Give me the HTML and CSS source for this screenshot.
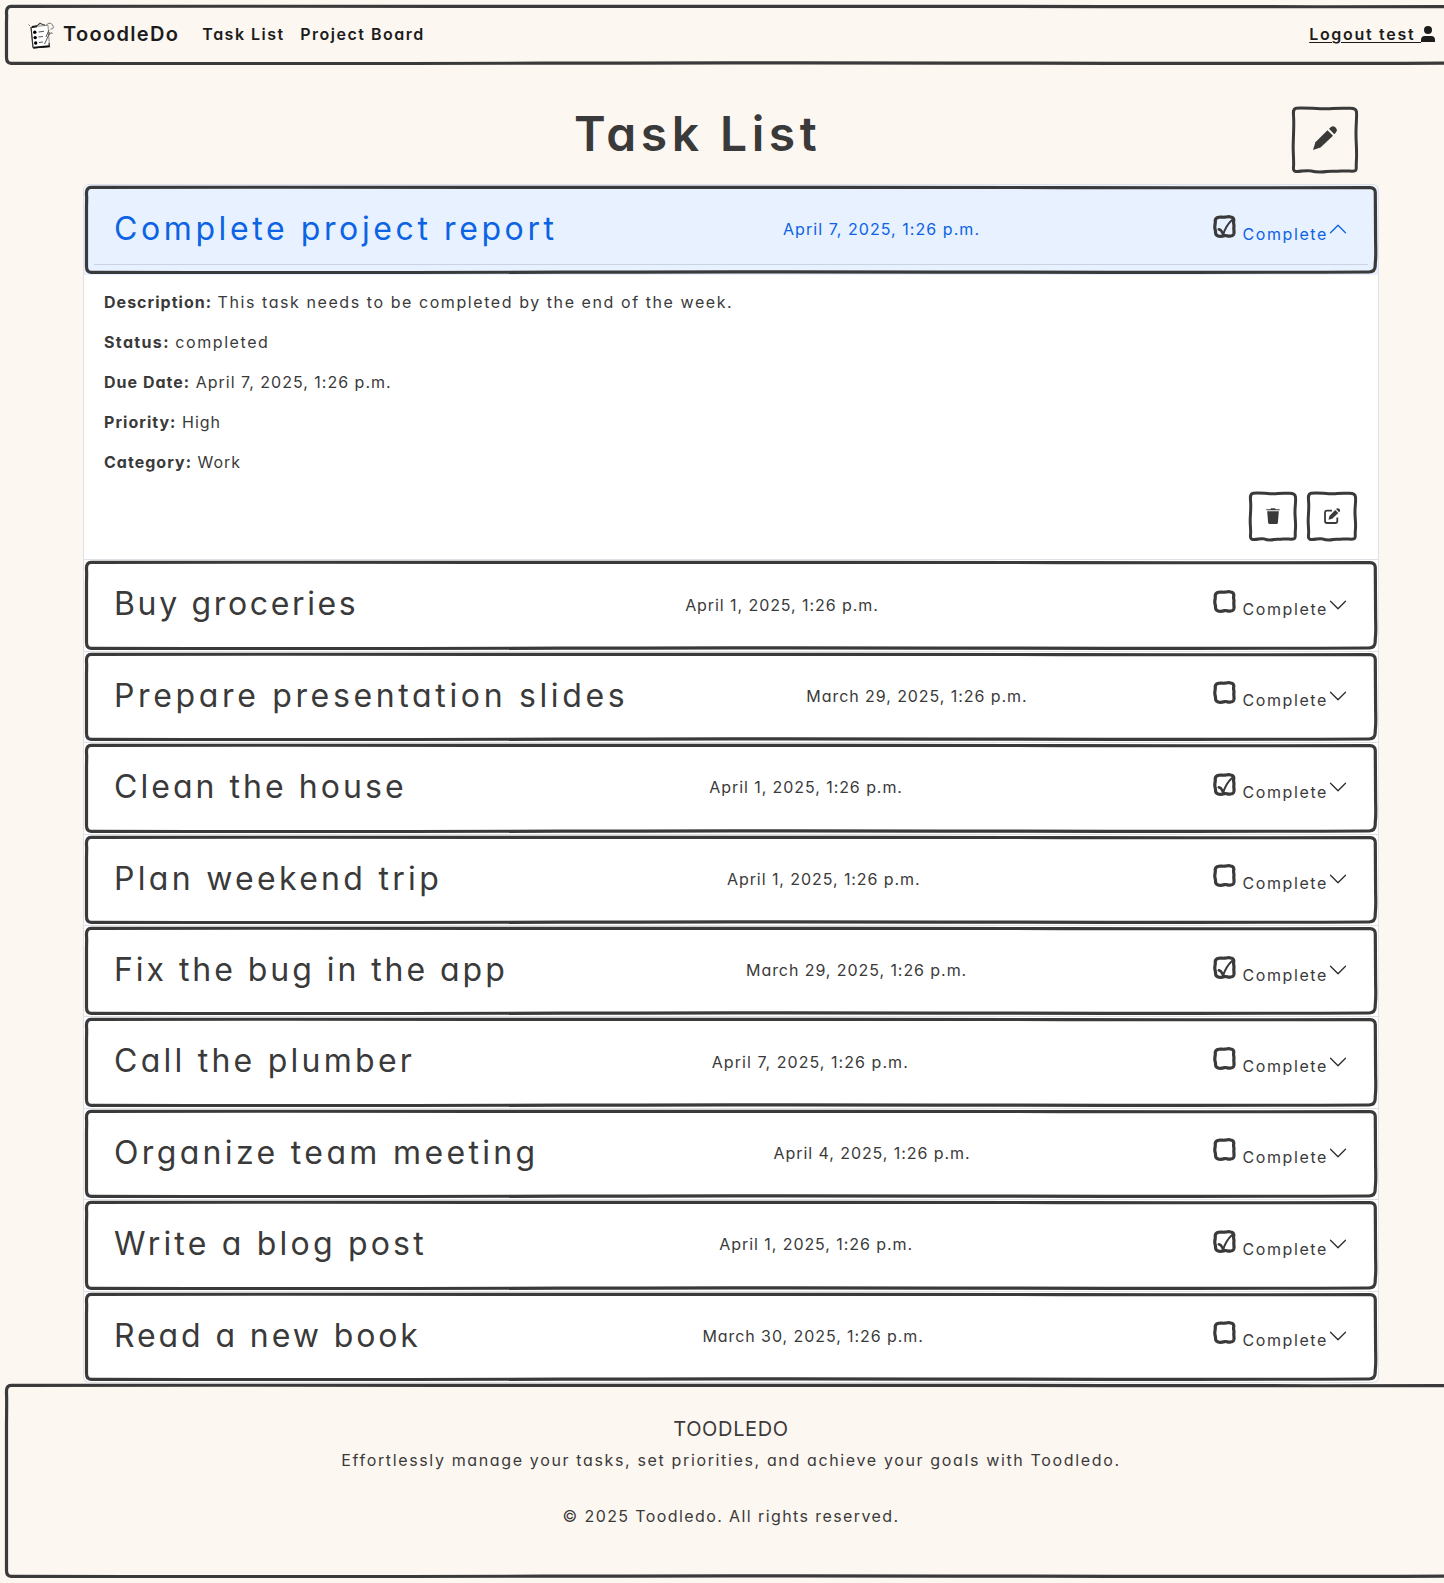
FILE: index.html
```html
<!DOCTYPE html>
<html lang="en">
<head>
<meta charset="utf-8">
<title>Task List</title>
<link rel="stylesheet" href="styles.css">
</head>
<body>
<svg class="defs" aria-hidden="true">
  <symbol id="chevron" viewBox="0 0 16 16"><path d="M1.646 4.646a.5.5 0 0 1 .708 0L8 10.293l5.646-5.647a.5.5 0 0 1 .708.708l-6 6a.5.5 0 0 1-.708 0l-6-6a.5.5 0 0 1 0-.708z"/></symbol>
  <symbol id="box" viewBox="0 0 23 23"><path class="ink" d="M5.5 2.3C8 1.6 9.5 2.4 11.5 2.2S15.500 1.200 17.800 2Q21 2.600 20.800 5.500C20 8 21.300 9.500 20.900 12S21.400 16 20.900 18.500Q20.300 21 17.500 21C15.500 21.800 13.500 20 11.500 20.600S7.500 21.800 5 20.900Q2.600 20.300 2.500 17.500C2.800 15.500 1.600 14 1.800 11.500S2.600 7.500 2.200 5.500Q2.600 2.700 5.500 2.300Z"/></symbol>
  <symbol id="box-on" viewBox="0 0 23 23"><use href="#box"/><path class="tick" d="M5.800 14.300L7.800 15.200 10.200 19.200"/><path class="tick thin" d="M10.200 19.400Q13 10.500 19 5"/></symbol>
</svg>
<div class="page">
  <header class="navbar sketch">
    <svg class="logo" viewBox="0 0 26 27">
      <path d="M3 5L20 3.200 21.500 24.500 5 26Z" fill="#fff" stroke="#777" stroke-width=".8"/>
      <path d="M5 26L21.500 24.600 21 21M3 5L5 25.500" fill="none" stroke="#333" stroke-width="1.200"/>
      <path d="M4 5L9 4.300" fill="none" stroke="#111" stroke-width="2"/>
      <path d="M7 4.500L10 3 12 1.200 14.500 2.500 17 3.200" fill="none" stroke="#444" stroke-width="1.200"/>
      <path d="M5.500 25.600L21 24.200" fill="none" stroke="#111" stroke-width="1.800"/>
      <path d="M10.500 10L16 9.300M10.500 15L15 14.500M11 20.500L15 20M22 10L18 19 16.500 22M21 8L18 15" fill="none" stroke="#555" stroke-width="1"/>
      <path d="M18 3.500Q22-1 24.500 3T22.500 7M21 13Q25 9 24 12M.5 2.500L2 4" fill="none" stroke="#666" stroke-width=".9"/>
      <circle cx="6.800" cy="10.300" r="1.700"/><circle cx="7.200" cy="15.600" r="1.700"/><circle cx="7.700" cy="21" r="1.700"/>
    </svg>
    <a class="brand">TooodleDo</a>
    <a class="nav-link">Task List</a>
    <a class="nav-link">Project Board</a>
    <a class="logout"><span>Logout test </span><svg viewBox="0 0 14 16"><circle cx="7" cy="4" r="4"/><path d="M0 16V14Q0 10 4 10H10Q14 10 14 14V16Z"/></svg></a>
  </header>

  <main class="container">
    <div class="heading">
      <h1>Task List</h1>
      <button class="icon-btn big rough" aria-label="New task"><svg viewBox="0 0 24 24"><path d="M14.500 4.200L20 9.700 7.500 21.600 0 24 2.400 16.300Z"/><path d="M16 2.800L18 .9Q20-.8 22.500 1.500T23 6.200L21.300 8.200Z"/></svg></button>
    </div>

    <div class="accordion">
      <section class="item">
        <div class="row sketch open"><h2>Complete project report</h2><span class="date d7">April 7, 2025, 1:26 p.m.</span><div class="check"><svg class="checkbox"><use href="#box-on"/></svg><label>Complete</label><svg class="chevron"><use href="#chevron"/></svg></div></div>
        <div class="details">
          <p><strong>Description:</strong> <span class="wide">This task needs to be completed by the end of the week.</span></p>
          <p><strong class="status">Status:</strong> <span class="wide">completed</span></p>
          <p><strong>Due Date:</strong> April 7, 2025, 1:26 p.m.</p>
          <p><strong>Priority:</strong> High</p>
          <p><strong>Category:</strong> Work</p>
          <div class="actions">
            <button class="icon-btn rough" aria-label="Delete"><svg viewBox="0 0 16 16"><path d="M1.300 2.200V1.200H5.400L6 .300H10L10.600 1.200H14.700V2.200ZM2.200 3.200H13.800L12.900 14.800Q12.800 15.900 11.800 15.900H4.200Q3.200 15.900 3.100 14.800Z"/></svg></button>
            <button class="icon-btn edit rough" aria-label="Edit"><svg viewBox="0 0 16 16"><path d="M8 2.600H3Q1 2.600 1 4.600V13Q1 15 3 15H11.300Q13.300 15 13.300 13V9.500" fill="none" stroke="currentColor" stroke-width="1.800"/><path d="M11.200 1.900L14.300 4.900 8.200 10.800 4.500 11.700 5.400 7.900Z"/><path d="M12 1.100Q13.800-.700 15.400.900T15.100 4.200Z"/></svg></button>
          </div>
        </div>
      </section>
      <section class="item"><div class="row sketch"><h2>Buy groceries</h2><span class="date">April 1, 2025, 1:26 p.m.</span><div class="check"><svg class="checkbox"><use href="#box"/></svg><label>Complete</label><svg class="chevron"><use href="#chevron"/></svg></div></div></section>
      <section class="item"><div class="row sketch"><h2>Prepare presentation slides</h2><span class="date">March 29, 2025, 1:26 p.m.</span><div class="check"><svg class="checkbox"><use href="#box"/></svg><label>Complete</label><svg class="chevron"><use href="#chevron"/></svg></div></div></section>
      <section class="item"><div class="row sketch"><h2>Clean the house</h2><span class="date">April 1, 2025, 1:26 p.m.</span><div class="check"><svg class="checkbox"><use href="#box-on"/></svg><label>Complete</label><svg class="chevron"><use href="#chevron"/></svg></div></div></section>
      <section class="item"><div class="row sketch"><h2>Plan weekend trip</h2><span class="date">April 1, 2025, 1:26 p.m.</span><div class="check"><svg class="checkbox"><use href="#box"/></svg><label>Complete</label><svg class="chevron"><use href="#chevron"/></svg></div></div></section>
      <section class="item"><div class="row sketch"><h2>Fix the bug in the app</h2><span class="date">March 29, 2025, 1:26 p.m.</span><div class="check"><svg class="checkbox"><use href="#box-on"/></svg><label>Complete</label><svg class="chevron"><use href="#chevron"/></svg></div></div></section>
      <section class="item"><div class="row sketch"><h2>Call the plumber</h2><span class="date d7">April 7, 2025, 1:26 p.m.</span><div class="check"><svg class="checkbox"><use href="#box"/></svg><label>Complete</label><svg class="chevron"><use href="#chevron"/></svg></div></div></section>
      <section class="item"><div class="row sketch"><h2>Organize team meeting</h2><span class="date">April 4, 2025, 1:26 p.m.</span><div class="check"><svg class="checkbox"><use href="#box"/></svg><label>Complete</label><svg class="chevron"><use href="#chevron"/></svg></div></div></section>
      <section class="item"><div class="row sketch"><h2>Write a blog post</h2><span class="date">April 1, 2025, 1:26 p.m.</span><div class="check"><svg class="checkbox"><use href="#box-on"/></svg><label>Complete</label><svg class="chevron"><use href="#chevron"/></svg></div></div></section>
      <section class="item"><div class="row sketch"><h2>Read a new book</h2><span class="date">March 30, 2025, 1:26 p.m.</span><div class="check"><svg class="checkbox"><use href="#box"/></svg><label>Complete</label><svg class="chevron"><use href="#chevron"/></svg></div></div></section>
    </div>
  </main>

  <footer class="footer sketch">
    <h5>TOODLEDO</h5>
    <p class="tagline">Effortlessly manage your tasks, set priorities, and achieve your goals with Toodledo.</p>
    <p class="copy">© 2025 Toodledo. All rights reserved.</p>
  </footer>
</div>
</body>
</html>
```
FILE: styles.css
```css
* { box-sizing: border-box; }

body {
  margin: 0;
  overflow: hidden;
  background: #fdf7f1;
  color: #3a3a3a;
  font-family: Inter, "Open Sans", sans-serif;
  font-feature-settings: "cv11";
  font-size: 16px;
  line-height: 24px;
}

h1, h2, h5, p { margin: 0; }
.defs { position: absolute; width: 0; height: 0; }
.ink { fill: none; stroke: #3a3a3a; stroke-width: 3.2; }
.tick { fill: none; stroke: #3a3a3a; stroke-width: 2.6; stroke-linecap: round; stroke-linejoin: round; }
.tick.thin { stroke-width: 2; }

/* hand drawn frames */
.sketch {
  border: 10px solid transparent;
  border-image: url("data:image/svg+xml,%3Csvg xmlns='http://www.w3.org/2000/svg' width='300' height='300'%3E%3Cpath fill='none' stroke='%233a3a3a' stroke-width='3.2' d='M7 2.400C60 1.900 110 2.600 160 2.400S250 3.100 292 2.600Q297.500 2.800 297.300 8C296.800 60 297 120 297.600 200S297.200 270 297.200 291Q297 296.800 291 297C240 298 200 296.600 150 296.900S60 297.900 7 297.300Q2.400 297.200 2.500 291C2.600 200 2.100 120 2.500 60S2.500 20 2.500 8Q2.600 2.600 7 2.400Z'/%3E%3C/svg%3E") 10 stretch;
}
.rough {
  border: 10px solid transparent;
  border-image: url("data:image/svg+xml,%3Csvg xmlns='http://www.w3.org/2000/svg' width='50' height='50'%3E%3Cpath fill='none' stroke='%233a3a3a' stroke-width='3' d='M5 2.200C9 1.800 13 2 17 2.300S22 3.100 27 2.700S34 1.900 40 2.300Q47 1.800 47.500 6C48 12 46.800 15 47 22S48 32 47.400 38S48 45 46.500 46.500C44 48 40 46.500 35 47S29 46.800 26 47.500S19 48 16 46.900S9 48 5 47.500Q2 47.400 2.500 43C3.100 38 2 34 2.200 28S3 17 2.700 12S1.500 3 5 2.200Z'/%3E%3C/svg%3E") 10 stretch;
}

.page {
  display: flex;
  flex-direction: column;
  width: 1454px;
  margin: 4px 0 0 4px;
}

.navbar {
  display: flex;
  align-items: center;
  height: 61.500px;
  padding: 0 12px 1px 14px;
  color: #1c1c1c;
  font-weight: 600;
}
.logo { width: 26px; height: 27px; margin: 3px 9px 0 0; }
.brand { font-size: 20px; letter-spacing: 1.33px; margin: -1px 23px 0 0; }
.nav-link { letter-spacing: 1.5px; margin-right: 15.500px; }
.logout { display: flex; align-items: center; margin-left: auto; letter-spacing: 1.7px; }
.logout span { white-space: pre; text-decoration: underline; text-underline-offset: 2px; }
.logout svg { width: 14px; height: 16px; margin-right: 1px; fill: currentColor; }

.container { width: 1296px; margin: 40.500px 0 0 79px; }
.heading { display: flex; height: 78px; padding-right: 20px; }
.heading h1 {
  flex: 1;
  padding-left: 21px;
  text-align: center;
  font-size: 48px;
  font-weight: 600;
  line-height: 56px;
  letter-spacing: 4.5px;
}

.icon-btn {
  display: flex;
  align-items: center;
  justify-content: center;
  width: 50px;
  height: 51px;
  padding: 0;
  background: none;
  color: #3a3a3a;
}
.icon-btn svg { width: 16px; height: 16px; fill: currentColor; margin-top: -2px; overflow: visible; }
.icon-btn.edit { width: 52px; }
.icon-btn.big { width: 68px; height: 68px; }
.icon-btn.big svg { width: 24px; height: 24px; margin-top: -4px; }

.accordion {
  border: 1px solid #dee2e6;
  border-bottom: 0;
  border-radius: 6px;
  background: #fff;
}
.item { border-bottom: 1px solid #dee2e6; }
.item:last-child { border-radius: 0 0 6px 6px; }
.row {
  display: flex;
  align-items: center;
  justify-content: space-between;
  height: 90.4px;
  padding: 15px 20px 17px;
}
.row.open {
  background: #e7f1ff;
  color: #0c63e4;
  box-shadow: inset 0 -1px 0 #c9d3e2;
  border-radius: 6px 6px 0 0;
}
.row h2 { font-size: 32px; font-weight: 400; line-height: 38.4px; }
.date { letter-spacing: .93px; margin-right: 8px; }
.date.d7 { letter-spacing: 1.05px; }
.check { display: flex; align-items: center; }
.checkbox { width: 23px; height: 23px; margin: -6px 6px 0 0; }
.check label { letter-spacing: 1.6px; padding-top: 9px; }
.chevron { width: 20px; height: 20px; fill: #2b2b2b; }
.open .chevron { fill: #0c63e4; transform: rotate(180deg); }

.item:nth-child(1) h2 { letter-spacing: 3.6px; }
.item:nth-child(2) h2 { letter-spacing: 2.65px; }
.item:nth-child(3) h2 { letter-spacing: 3.65px; }
.item:nth-child(4) h2 { letter-spacing: 3.05px; }
.item:nth-child(5) h2 { letter-spacing: 3.3px; }
.item:nth-child(6) h2 { letter-spacing: 2.95px; }
.item:nth-child(7) h2 { letter-spacing: 3.25px; }
.item:nth-child(8) h2 { letter-spacing: 3.35px; }
.item:nth-child(9) h2 { letter-spacing: 3.2px; }
.item:nth-child(10) h2 { letter-spacing: 2.9px; }

.details { padding: 15px 20px 16px; height: 284px; }
.details p { margin-bottom: 16px; letter-spacing: 1px; }
.details strong { letter-spacing: 1.02px; }
.details .status { letter-spacing: 1.35px; }
.details .wide { letter-spacing: 1.57px; }
.actions { display: flex; justify-content: flex-end; gap: 8px; padding-top: 1px; }

.footer {
  height: 196px;
  padding: 24px 0 0;
  text-align: center;
}
.footer h5 { font-size: 20px; font-weight: 400; letter-spacing: .66px; margin-bottom: 7px; }
.tagline { letter-spacing: 1.64px; }
.copy { letter-spacing: 1.4px; margin-top: 32px; }
```
